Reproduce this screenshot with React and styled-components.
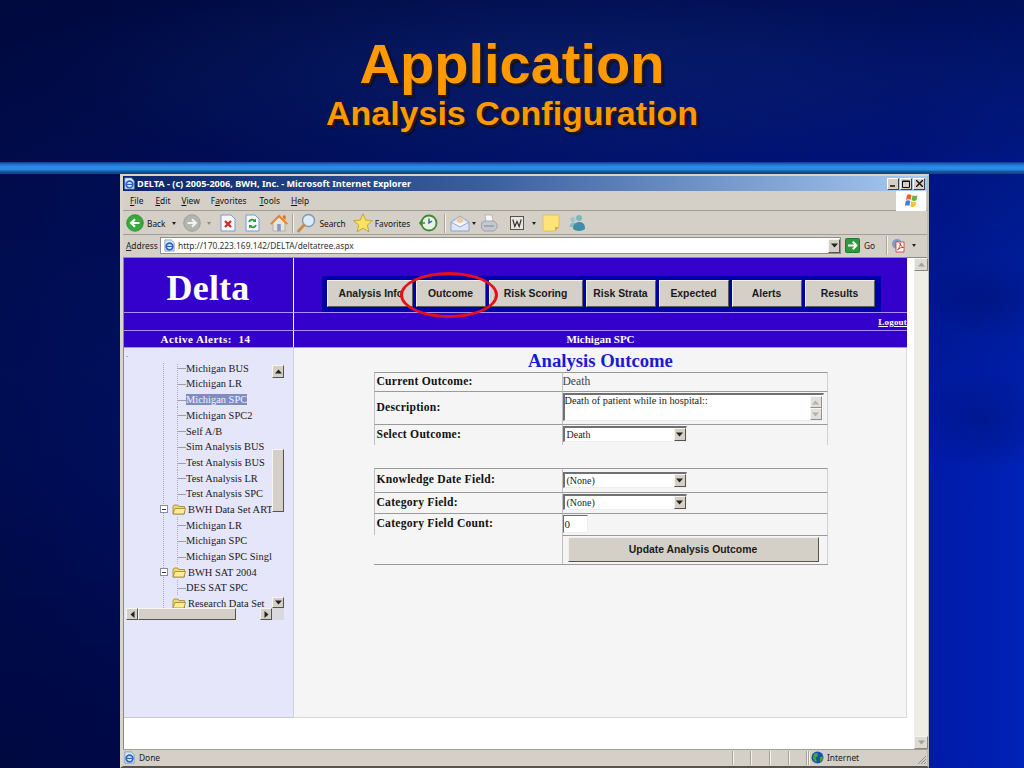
import React from "react";
import styled, { createGlobalStyle } from "styled-components";

const GlobalStyle = createGlobalStyle`
  html, body {
    margin: 0;
    padding: 0;
    overflow: hidden;
    background: #001a80;
  }
  * {
    box-sizing: border-box;
  }
`;

const uiFont = `"Noto Sans", "Liberation Sans", sans-serif`;
const pageFont = `"Liberation Serif", serif`;
const buttonFont = `"Liberation Sans", sans-serif`;

const Slide = styled.div`
  width: 1024px;
  height: 768px;
  overflow: hidden;
  display: flex;
  flex-direction: column;
  background:
    radial-gradient(ellipse 70px 40px at 985px 300px, rgba(0, 10, 90, 0.3), rgba(0, 10, 90, 0) 100%),
    radial-gradient(ellipse 70px 50px at 985px 420px, rgba(0, 10, 90, 0.3), rgba(0, 10, 90, 0) 100%),
    radial-gradient(ellipse 500px 110px at 560px 70px, rgba(30, 70, 150, 0.25), rgba(30, 70, 150, 0) 100%),
    linear-gradient(180deg, rgba(0, 8, 50, 0.68) 0%, rgba(0, 8, 50, 0.32) 24%, rgba(0, 8, 50, 0) 62%),
    linear-gradient(180deg, rgba(0, 0, 30, 0) 45%, rgba(0, 0, 30, 0.42) 100%) 0 0 / 130px 100% no-repeat,
    linear-gradient(90deg, #000e58 0%, #000f62 12%, #0018a4 88%, #0022b6 100%);
`;

const Heading = styled.header`
  height: 162px;
  padding-top: 33px;
  text-align: center;
  font-family: "Liberation Sans", sans-serif;
  font-weight: 700;
  color: #ff9900;
  text-shadow: 2px 2px 0 #2a1800, 3px 3px 2px rgba(0, 0, 0, 0.5);
`;

const MainTitle = styled.h1`
  margin: 0;
  font-size: 56px;
  line-height: 62px;
  font-weight: 700;
`;

const SubTitle = styled.h2`
  margin: 0;
  font-size: 34px;
  line-height: 36px;
  font-weight: 700;
`;

const Rule = styled.div`
  height: 12px;
  flex: none;
  background: linear-gradient(180deg, #0a3a8c 0%, #1c6cc8 18%, #2c8ce8 40%, #2a88e0 62%, #14559f 80%, #0d3f88 100%);
`;

const Win = styled.div`
  margin: 0 0 0 120px;
  width: 809px;
  height: 594px;
  flex: none;
  display: flex;
  flex-direction: column;
  background: #d4d0c8;
  border: 2px solid #d8d5cd;
  border-left-width: 3px;
  border-right-color: #bcb9b0;
  border-bottom-color: #55534e;
`;

const TitleBar = styled.div`
  height: 15px;
  flex: none;
  display: flex;
  align-items: center;
  padding: 0 2px 0 0;
  background: linear-gradient(90deg, #0a246a 0%, #3a5f9e 45%, #a6caf0 100%);
  color: #fff;
  font: 700 9.15px ${uiFont};
`;

const TitleText = styled.span`
  margin-left: 1px;
  flex: 1;
  white-space: nowrap;
`;

const WinButton = styled.button`
  width: 12px;
  height: 12px;
  margin-left: 1px;
  padding: 0;
  display: flex;
  align-items: center;
  justify-content: center;
  background: #d4d0c8;
  border: 1px solid;
  border-color: #fff #404040 #404040 #fff;
`;

const MenuRow = styled.div`
  height: 20px;
  flex: none;
  display: flex;
  align-items: center;
  border-bottom: 1px solid #a09e97;
  font: 400 8.4px ${uiFont};
  color: #111;
`;

const MenuItem = styled.span`
  margin-left: ${(p) => p.$ml}px;
  white-space: nowrap;
  u {
    text-underline-offset: 1px;
  }
`;

const FlagBox = styled.div`
  width: 30px;
  height: 20px;
  margin-left: auto;
  margin-right: 1px;
  display: flex;
  align-items: center;
  justify-content: center;
  background: #fff;
`;

const ToolRow = styled.div`
  height: 24px;
  flex: none;
  display: flex;
  align-items: center;
  padding-top: 1px;
  border-bottom: 1px solid #a09e97;
  font: 400 8.3px ${uiFont};
  color: #111;
`;

const Tool = styled.div`
  margin-left: ${(p) => p.$ml || 0}px;
  display: flex;
  align-items: center;
  flex: none;
  white-space: nowrap;
`;

const Sep = styled.div`
  width: 1px;
  height: 19px;
  flex: none;
  margin-left: ${(p) => p.$ml || 0}px;
  background: #a8a59d;
  box-shadow: 1px 0 0 #f4f2ec;
`;

const Caret = styled.span`
  width: 0;
  height: 0;
  flex: none;
  margin-left: ${(p) => p.$ml || 0}px;
  border-left: 2.5px solid transparent;
  border-right: 2.5px solid transparent;
  border-top: 3px solid ${(p) => p.$color || "#222"};
`;

const AddressRow = styled.div`
  height: 23px;
  flex: none;
  display: flex;
  align-items: center;
  padding-bottom: 1px;
  border-bottom: 1px solid #8c8a84;
  font: 400 8.4px ${uiFont};
  color: #222;
`;

const AddressLabel = styled.span`
  margin-left: 3px;
  width: 34px;
`;

const AddressBox = styled.div`
  width: 681px;
  height: 17px;
  display: flex;
  align-items: center;
  padding-left: 2px;
  background: #fff;
  border: 1px solid #8f8d86;
  font-size: 8.4px;
  color: #333;
`;

const UrlText = styled.span`
  margin-left: 2px;
  flex: 1;
`;

const ArrowButton = styled.span`
  width: ${(p) => p.$w || 12}px;
  height: ${(p) => p.$h || 13}px;
  flex: none;
  display: flex;
  align-items: center;
  justify-content: center;
  background: #d4d0c8;
  border: 1px solid;
  border-color: #f6f5f1 #55534e #55534e #f6f5f1;
  opacity: ${(p) => (p.$faint ? 0.65 : 1)};
`;

const Viewport = styled.div`
  flex: 1;
  min-height: 0;
  display: flex;
  background: #fff;
  border-left: 1px solid #8c8a84;
`;

const PageArea = styled.div`
  width: 790px;
  flex: none;
  padding-right: 7px;
`;

const Frame = styled.div`
  height: 460px;
  display: grid;
  grid-template-columns: 170px 1fr;
  grid-template-rows: 55px 18px 17px 1fr;
  background: #3300cc;
  color: #fff;
  font-family: ${pageFont};
`;

const Cell = styled.div`
  display: flex;
  align-items: center;
  justify-content: ${(p) => p.$justify || "center"};
  padding-right: ${(p) => p.$nudge || 0}px;
  border-bottom: 1px solid #a68fff;
  border-right: ${(p) => (p.$side ? "1px solid #fff" : "0")};
  font-size: 11px;
  font-weight: 700;
  letter-spacing: ${(p) => p.$track || 0}px;
  position: relative;
`;

const Brand = styled.div`
  font-size: 36px;
  font-weight: 700;
  letter-spacing: 0.2px;
  margin-top: 5px;
  margin-right: 1px;
`;

const NavStrip = styled.nav`
  margin-left: 28px;
  margin-right: auto;
  margin-top: 17px;
  height: 36px;
  display: flex;
  align-items: center;
  gap: 3px;
  padding: 0 6px 0 4.5px;
  background: #0000a8;
`;

const NavButton = styled.button`
  width: ${(p) => p.$w || 70}px;
  height: 27px;
  padding: 0 0 0 ${(p) => p.$pad || 0}px;
  overflow: hidden;
  white-space: nowrap;
  text-align: ${(p) => (p.$pad ? "left" : "center")};
  background: #d4d0c8;
  border: 1px solid;
  border-color: #f2f0eb #5c5a56 #5c5a56 #f2f0eb;
  font: 700 10.4px ${buttonFont};
  color: #1a1a1a;
`;

const Ring = styled.div`
  position: absolute;
  left: 106px;
  top: 14px;
  width: 98px;
  height: 46px;
  border: 3.5px solid #e60f1e;
  border-radius: 50%;
`;

const LogoutLink = styled.a`
  margin-left: auto;
  font-size: 9px;
  color: #fff;
  text-decoration: underline;
  letter-spacing: 0.2px;
`;

const SidePane = styled.aside`
  background: #e6e6fa;
  border-right: 1px solid #d0cfd8;
  border-bottom: 1px solid #c8c8d0;
  padding: 2px 0 0 2px;
  color: #111;
`;

const Speck = styled.div`
  height: 13px;
  font: 400 9px/9px ${pageFont};
  color: #555;
`;

const TreeWrap = styled.div`
  width: 158px;
  display: grid;
  grid-template-columns: 146px 12px;
  grid-template-rows: 245px 12px;
`;

const TreeList = styled.div`
  overflow: hidden;
  background: repeating-linear-gradient(180deg, #a8a8c0 0 1px, transparent 1px 2px) 37px 0 / 1px 100% no-repeat;
`;

const TreeRows = styled.div`
  margin-top: -2.6px;
`;

const TreeRow = styled.div`
  height: 15.7px;
  display: flex;
  align-items: center;
  white-space: nowrap;
  font: 400 10.4px ${pageFont};
  color: #1a1a1a;
`;

const LeafStem = styled.span`
  width: 60px;
  height: 15.7px;
  flex: none;
  background:
    repeating-linear-gradient(180deg, #a8a8c0 0 1px, transparent 1px 2px) 51px 0 / 1px 100% no-repeat,
    linear-gradient(#9c9cb0, #9c9cb0) 51px 8px / 9px 1px no-repeat;
`;

const Expander = styled.span`
  width: 8px;
  height: 8px;
  flex: none;
  margin-left: 34px;
  background:
    linear-gradient(#333, #333) 1px 2.5px / 4px 1px no-repeat,
    #fff;
  border: 1px solid #8c8c9c;
`;

const FolderSlot = styled.span`
  margin: 0 2px 0 ${(p) => p.$ml || 4}px;
  display: flex;
  flex: none;
`;

const RowLabel = styled.span`
  letter-spacing: 0.02px;
  background: ${(p) => (p.$selected ? "#7f8cc0" : "transparent")};
  color: ${(p) => (p.$selected ? "#f2f2ff" : "inherit")};
`;

const ScrollV = styled.div`
  display: flex;
  flex-direction: column;
  background: #e6e6fa;
`;

const ScrollGap = styled.div`
  height: ${(p) => p.$h}px;
  flex: ${(p) => (p.$grow ? 1 : "none")};
`;

const ScrollThumb = styled.div`
  height: ${(p) => p.$h}px;
  width: ${(p) => p.$w || "100%"};
  flex: none;
  background: #d4d0c8;
  border: 1px solid;
  border-color: #f6f5f1 #55534e #55534e #f6f5f1;
`;

const ScrollH = styled.div`
  display: flex;
  align-items: center;
  background: #e6e6fa;
`;

const Corner = styled.div`
  background: #d8d8de;
`;

const MainPane = styled.main`
  background: #f5f5f5;
  border-bottom: 1px solid #d8d8d8;
  border-right: 1px solid #dcdcdc;
  color: #1a1a1a;
  display: flex;
  flex-direction: column;
  align-items: center;
`;

const PaneTitle = styled.div`
  margin: 2px 0 0 1px;
  height: 22px;
  font-size: 18.7px;
  line-height: 22px;
  font-weight: 700;
  color: #1a1ad2;
`;

const FormTable = styled.div`
  width: 454px;
  border-bottom: 1px solid #9a9a9a;
  margin-left: 1px;
`;

const FormRow = styled.div`
  height: ${(p) => p.$h}px;
  display: grid;
  grid-template-columns: 188px 1fr;
`;

const LabelCell = styled.div`
  display: flex;
  align-items: center;
  padding: 0 0 2px 2px;
  border-left: ${(p) => (p.$plain ? "0" : "1px solid #c0c0c0")};
  border-top: ${(p) => (p.$plain ? "0" : "1px solid #9a9a9a")};
  font-size: 11.6px;
  font-weight: 700;
  letter-spacing: 0.25px;
  color: #111;
  white-space: nowrap;
`;

const ValueCell = styled.div`
  display: flex;
  align-items: center;
  padding: 0 0 2px 0;
  border-left: ${(p) => (p.$blank ? "0" : "1px solid #c0c0c0")};
  border-top: ${(p) => (p.$blank ? "0" : "1px solid #9a9a9a")};
  border-right: ${(p) => (p.$blank ? "0" : "1px solid #cfcfcf")};
  font-size: 11.6px;
  color: #444;
`;

const TextArea = styled.div`
  width: 261px;
  height: 28px;
  display: flex;
  justify-content: space-between;
  padding: 0 1px 0 0;
  background: #fff;
  border: 2px solid;
  border-color: #707070 #eee #eee #707070;
  border-width: 2px 1px 1px 2px;
  font-size: 10.3px;
  color: #222;
`;

const AreaScroll = styled.div`
  width: 12px;
  display: flex;
  flex-direction: column;
  justify-content: space-between;
  padding: 1px 0;
  flex: none;
`;

const Dropdown = styled.div`
  width: 124px;
  height: 16px;
  display: flex;
  align-items: center;
  justify-content: space-between;
  padding-left: 2px;
  background: #fff;
  border: 2px solid;
  border-color: #707070 #eee #eee #707070;
  border-width: 2px 1px 1px 2px;
  font-size: 10px;
  color: #222;
`;

const CountInput = styled.div`
  width: 25px;
  height: 18px;
  display: flex;
  align-items: center;
  padding-left: 1px;
  background: #fff;
  border: 1px solid;
  border-color: #6a6a6a #eee #eee #6a6a6a;
  font-size: 11px;
  color: #222;
`;

const UpdateButton = styled.button`
  width: 251px;
  height: 25px;
  margin-left: 5px;
  background: #d4d0c8;
  border: 1px solid;
  border-color: #f2f0eb #55534e #55534e #f2f0eb;
  font: 700 10.4px ${buttonFont};
  color: #1a1a1a;
`;

const PageScroll = styled.div`
  width: 14px;
  flex: none;
  display: flex;
  flex-direction: column;
  justify-content: space-between;
  background: #eeede6;
`;

const StatusBar = styled.footer`
  height: 17px;
  flex: none;
  display: flex;
  align-items: center;
  padding-bottom: 1px;
  border-top: 1px solid #a09e97;
  font: 400 8.4px ${uiFont};
  color: #222;
`;

const StatusText = styled.span`
  margin-left: 3px;
  width: 575px;
`;

const StatusSlot = styled.span`
  width: ${(p) => p.$w}px;
  height: 14px;
  flex: none;
  border-right: 1px solid #a5a39c;
  box-shadow: 1px 0 0 #f4f2ec;
`;

const ZoneCell = styled.span`
  margin-left: 2px;
  display: flex;
  align-items: center;
  gap: 3px;
  flex: 1;
`;

const Grip = styled.svg`
  flex: none;
  margin-top: 4px;
`;

const Up = ({ color = "#222" }) => (
  <svg width="7" height="5" viewBox="0 0 7 5"><path d="M3.5 0.5 7 4.5H0Z" fill={color} /></svg>
);
const Down = ({ color = "#222" }) => (
  <svg width="7" height="5" viewBox="0 0 7 5"><path d="M3.5 4.5 7 0.5H0Z" fill={color} /></svg>
);
const Left = () => (
  <svg width="5" height="7" viewBox="0 0 5 7"><path d="M0.5 3.5 4.5 0V7Z" fill="#222" /></svg>
);
const Right = () => (
  <svg width="5" height="7" viewBox="0 0 5 7"><path d="M4.5 3.5 0.5 0V7Z" fill="#222" /></svg>
);

const IeDoc = ({ size = 13 }) => (
  <svg width={size} height={size} viewBox="0 0 14 14">
    <path d="M2 1h7l3 3v9H2z" fill="#dce8f6" stroke="#6c8fc0" strokeWidth="0.8" />
    <circle cx="7" cy="8" r="3.6" fill="none" stroke="#2a62c8" strokeWidth="1.8" />
    <path d="M3.5 8h7" stroke="#2a62c8" strokeWidth="1.2" />
  </svg>
);

const WinFlag = () => (
  <svg width="19" height="15" viewBox="0 0 19 15">
    <path d="M5 2c2-1 3-1 4.500 0l-1 5c-1.500-1-3-1-4.500 0z" fill="#e8622a" />
    <path d="M10.500 2.300c2 1 3 1 5 0l-1 5c-2 1-3 1-5 0z" fill="#6cb33e" />
    <path d="M3.800 8c1.500-1 3-1 4.500 0l-1 5c-1.500-1-3-1-4.500 0z" fill="#3f7fd6" />
    <path d="M9.300 8.300c2 1 3 1 5 0l-1 5c-2 1-3 1-5 0z" fill="#f2c230" />
  </svg>
);

const RoundArrow = ({ fill, ring }) => (
  <svg width="18" height="18" viewBox="0 0 18 18">
    <circle cx="9" cy="9" r="8.300" fill={fill} stroke={ring} strokeWidth="0.8" />
    <path d="M13.500 9H6M9 5.200 5.200 9 9 12.800" fill="none" stroke="#fff" strokeWidth="2.200" />
  </svg>
);

const ForwardArrow = () => (
  <svg width="18" height="18" viewBox="0 0 18 18">
    <circle cx="9" cy="9" r="8.300" fill="#b4b4ae" stroke="#94948e" strokeWidth="0.8" />
    <path d="M4.500 9H12M9 5.200 12.800 9 9 12.800" fill="none" stroke="#f2f2ee" strokeWidth="2.200" />
  </svg>
);

const StopIcon = () => (
  <svg width="16" height="18" viewBox="0 0 16 18">
    <path d="M1 1h10l4 4v12H1z" fill="#f4f7fd" stroke="#7d9ad0" />
    <path d="M5 7l6 6M11 7l-6 6" stroke="#d8261c" strokeWidth="2.200" />
  </svg>
);

const RefreshIcon = () => (
  <svg width="15" height="18" viewBox="0 0 15 18">
    <path d="M1 1h9l4 4v12H1z" fill="#f4f7fd" stroke="#7d9ad0" />
    <path d="M4 8a3.500 3.500 0 0 1 6-1M11 11a3.500 3.500 0 0 1-6 1" fill="none" stroke="#2f9a35" strokeWidth="1.800" />
    <path d="M11 4.500v3.500H7.700zM4 14.500V11h3.300z" fill="#2f9a35" />
  </svg>
);

const HomeIcon = () => (
  <svg width="20" height="20" viewBox="0 0 20 20">
    <path d="M4 9v9h12V9L10 4z" fill="#e9e4da" stroke="#a8a090" strokeWidth="0.7" />
    <path d="M1 10.500 10 1.500l9 9-1.500 1.200L10 4.500 2.500 11.700z" fill="#e8852a" />
    <path d="M14 2.500h2.500V7L14 5z" fill="#c9702a" />
    <rect x="8.200" y="11" width="3.600" height="7" fill="#7f9cc8" />
  </svg>
);

const SearchIcon = () => (
  <svg width="19" height="20" viewBox="0 0 19 20">
    <circle cx="11.500" cy="7.500" r="6" fill="#dcebf8" stroke="#7d98b8" strokeWidth="1.400" />
    <path d="M7 12 1.500 18" stroke="#c88a48" strokeWidth="2.800" strokeLinecap="round" />
  </svg>
);

const StarIcon = () => (
  <svg width="20" height="20" viewBox="0 0 20 20">
    <path d="M10 .8l2.700 6.300 6.700.6-5.100 4.400 1.600 6.600L10 15.200l-5.900 3.500 1.600-6.600L.6 7.700l6.700-.6z" fill="#fbe25c" stroke="#b89a20" strokeWidth="0.8" />
  </svg>
);

const HistoryIcon = () => (
  <svg width="19" height="18" viewBox="0 0 19 18">
    <circle cx="10" cy="9" r="7.500" fill="#e8f3e4" stroke="#3c8a3a" strokeWidth="1.800" />
    <path d="M10 4.500V9l3-2" fill="none" stroke="#2c5a9a" strokeWidth="1.400" />
    <path d="M1 9h5M3 6.500 .8 9 3 11.500" fill="none" stroke="#3c8a3a" strokeWidth="1.600" />
  </svg>
);

const MailIcon = () => (
  <svg width="20" height="18" viewBox="0 0 20 18">
    <path d="M1 8 10 2l9 6v9H1z" fill="#dde6f4" stroke="#7f96c2" strokeWidth="0.8" />
    <path d="M1 8l9 5 9-5" fill="#f4f7fc" stroke="#7f96c2" strokeWidth="0.8" />
    <circle cx="10" cy="6" r="3" fill="#f0c8a0" />
  </svg>
);

const PrintIcon = () => (
  <svg width="18" height="18" viewBox="0 0 18 18">
    <path d="M5 1h7l1 7H6z" fill="#f6f6f4" stroke="#a8a8a4" strokeWidth="0.7" />
    <path d="M1.500 9 5 7h9l3 3v4l-3 3H4l-2.500-3z" fill="#c4c8d0" stroke="#8c8f96" strokeWidth="0.7" />
    <path d="M4 12h10" stroke="#80848c" />
  </svg>
);

const WordIcon = () => (
  <svg width="14" height="14" viewBox="0 0 14 14">
    <rect x="0.500" y="0.500" width="13" height="13" fill="#e8e6e0" stroke="#55534e" />
    <path d="M2.800 3.500 4.800 10.500 7 5.500 9.200 10.500 11.200 3.500" fill="none" stroke="#333" strokeWidth="1.200" />
  </svg>
);

const NoteIcon = () => (
  <svg width="18" height="18" viewBox="0 0 18 18">
    <path d="M1 2.500Q1 1 2.500 1h13Q17 1 17 2.500V13l-4 4H2.500Q1 17 1 15.500z" fill="#ffe27a" stroke="#e8b84a" strokeWidth="0.8" />
    <path d="M17 13h-4v4z" fill="#e0a83a" />
  </svg>
);

const PeopleIcon = () => (
  <svg width="18" height="18" viewBox="0 0 18 18">
    <circle cx="5" cy="5.500" r="2.500" fill="#9cc4cc" />
    <circle cx="11" cy="4" r="3" fill="#80b4c0" />
    <path d="M1.500 13c0-3 2-4.500 4-4.500S9 10 9 13z" fill="#8cb8c0" />
    <path d="M5 15c0-5 3-7 6.500-7s5.500 2 5.500 7c-3 2.500-9 2.500-12 0z" fill="#3f8fa8" />
  </svg>
);

const GoIcon = () => (
  <svg width="15" height="15" viewBox="0 0 15 15">
    <rect x="0.500" y="0.500" width="14" height="14" rx="1" fill="#2f9a3c" stroke="#1f7a2c" />
    <path d="M3 7.500h8M7.800 3.800l3.700 3.700-3.700 3.700" fill="none" stroke="#fff" strokeWidth="2" />
  </svg>
);

const PdfIcon = () => (
  <svg width="15" height="15" viewBox="0 0 15 15">
    <circle cx="6" cy="6" r="5" fill="#7f9cc8" />
    <path d="M5 4h8v10H5z" fill="#fff" stroke="#c83028" strokeWidth="0.8" />
    <path d="M6.500 12c2-2 3-5 2.500-7 1 3 2 4 3.500 4.500-2-.2-4 .5-6 2.500z" fill="none" stroke="#d02820" strokeWidth="0.9" />
  </svg>
);

const Globe = () => (
  <svg width="13" height="13" viewBox="0 0 13 13">
    <circle cx="6.500" cy="6.500" r="6" fill="#1a4fa8" />
    <path d="M3 2.500 6.500 2 7 5 4.500 7 6 10.500 4 11 2 7zM9 6l3-.5-.5 3.500L9 11z" fill="#3fa83a" />
  </svg>
);

const Folder = () => (
  <svg width="14" height="11" viewBox="0 0 14 11">
    <path d="M1 2.500 2 1h4l1 1.500h5.500V10H1z" fill="#f2d860" stroke="#8a7a30" strokeWidth="0.7" />
    <path d="M1 10 3 4.500h10.500L12 10z" fill="#ffeb94" stroke="#8a7a30" strokeWidth="0.7" />
  </svg>
);

const menuItems = [
  { ml: 7, label: <><u>F</u>ile</> },
  { ml: 12, label: <><u>E</u>dit</> },
  { ml: 11, label: <><u>V</u>iew</> },
  { ml: 11, label: <>F<u>a</u>vorites</> },
  { ml: 13, label: <><u>T</u>ools</> },
  { ml: 11, label: <><u>H</u>elp</> },
];

const navItems = [
  { label: "Analysis Info", w: 86, pad: 11 },
  { label: "Outcome", w: 70 },
  { label: "Risk Scoring", w: 94 },
  { label: "Risk Strata", w: 70 },
  { label: "Expected", w: 70 },
  { label: "Alerts", w: 70 },
  { label: "Results", w: 70 },
];

const treeItems = [
  { label: "Michigan BUS" },
  { label: "Michigan LR" },
  { label: "Michigan SPC", selected: true },
  { label: "Michigan SPC2" },
  { label: "Self A/B" },
  { label: "Sim Analysis BUS" },
  { label: "Test Analysis BUS" },
  { label: "Test Analysis LR" },
  { label: "Test Analysis SPC" },
  { label: "BWH Data Set ART", folder: true },
  { label: "Michigan LR" },
  { label: "Michigan SPC" },
  { label: "Michigan SPC Single" },
  { label: "BWH SAT 2004", folder: true },
  { label: "DES SAT SPC" },
  { label: "Research Data Set", folder: true, closed: true },
];

const formRows = [
  { h: 19, label: "Current Outcome:", value: "Death" },
  { h: 33, label: "Description:", area: "Death of patient while in hospital::" },
  { h: 21, label: "Select Outcome:", select: "Death" },
  { h: 23, blank: true },
  { h: 24, label: "Knowledge Date Field:", select: "(None)" },
  { h: 21, label: "Category Field:", select: "(None)" },
  { h: 22, label: "Category Field Count:", count: "0" },
  { h: 29, update: true },
];

export default function App() {
  return (
    <Slide>
      <GlobalStyle />
      <Heading>
        <MainTitle>Application</MainTitle>
        <SubTitle>Analysis Configuration</SubTitle>
      </Heading>
      <Rule />
      <Win>
        <TitleBar>
          <IeDoc size={13} />
          <TitleText>DELTA - (c) 2005-2006, BWH, Inc. - Microsoft Internet Explorer</TitleText>
          <WinButton>
            <svg width="7" height="7" viewBox="0 0 7 7"><path d="M0 6h5" stroke="#111" strokeWidth="1.500" /></svg>
          </WinButton>
          <WinButton>
            <svg width="8" height="8" viewBox="0 0 8 8"><path d="M.5 1h7v6.500h-7zM.5 1.500h7" fill="none" stroke="#111" /></svg>
          </WinButton>
          <WinButton>
            <svg width="7" height="7" viewBox="0 0 7 7"><path d="M0 0l7 7M7 0 0 7" stroke="#111" strokeWidth="1.400" /></svg>
          </WinButton>
        </TitleBar>
        <MenuRow>
          {menuItems.map((item, index) => (
            <MenuItem key={index} $ml={item.ml}>{item.label}</MenuItem>
          ))}
          <FlagBox><WinFlag /></FlagBox>
        </MenuRow>
        <ToolRow>
          <Tool $ml={3}><RoundArrow fill="#3aa83c" ring="#2a8a30" /></Tool>
          <Tool $ml={3}>Back</Tool>
          <Caret $ml={7} />
          <Tool $ml={7}><ForwardArrow /></Tool>
          <Caret $ml={6} $color="#8c8c86" />
          <Tool $ml={9}><StopIcon /></Tool>
          <Tool $ml={9}><RefreshIcon /></Tool>
          <Tool $ml={9}><HomeIcon /></Tool>
          <Sep $ml={3} />
          <Tool $ml={4}><SearchIcon /></Tool>
          <Tool $ml={3}>Search</Tool>
          <Tool $ml={7}><StarIcon /></Tool>
          <Tool $ml={2}>Favorites</Tool>
          <Tool $ml={9}><HistoryIcon /></Tool>
          <Sep $ml={6} />
          <Tool $ml={5}><MailIcon /></Tool>
          <Caret $ml={2} />
          <Tool $ml={4}><PrintIcon /></Tool>
          <Tool $ml={12}><WordIcon /></Tool>
          <Caret $ml={8} />
          <Tool $ml={6}><NoteIcon /></Tool>
          <Tool $ml={8}><PeopleIcon /></Tool>
        </ToolRow>
        <AddressRow>
          <AddressLabel><u>A</u>ddress</AddressLabel>
          <AddressBox>
            <IeDoc size={13} />
            <UrlText>http://170.223.169.142/DELTA/deltatree.aspx</UrlText>
            <ArrowButton $w={12} $h={14}><Down /></ArrowButton>
          </AddressBox>
          <Tool $ml={4}><GoIcon /></Tool>
          <Tool $ml={4}>Go</Tool>
          <Sep $ml={11} />
          <Tool $ml={4}><PdfIcon /></Tool>
          <Caret $ml={6} />
        </AddressRow>
        <Viewport>
          <PageArea>
            <Frame>
              <Cell $side><Brand>Delta</Brand></Cell>
              <Cell>
                <NavStrip>
                  {navItems.map((item) => (
                    <NavButton key={item.label} $w={item.w} $pad={item.pad}>{item.label}</NavButton>
                  ))}
                </NavStrip>
                <Ring />
              </Cell>
              <Cell $side />
              <Cell $justify="flex-end"><LogoutLink>Logout</LogoutLink></Cell>
              <Cell $side $track={0.5} $nudge={6}>Active Alerts:&nbsp; 14</Cell>
              <Cell>Michigan SPC</Cell>
              <SidePane>
                <Speck>.</Speck>
                <TreeWrap>
                  <TreeList>
                    <TreeRows>
                      {treeItems.map((item, index) => (
                        <TreeRow key={index}>
                          {item.folder ? (
                            <>
                              {item.closed ? <FolderSlot $ml={46}><Folder /></FolderSlot> : <Expander />}
                              {!item.closed && <FolderSlot><Folder /></FolderSlot>}
                            </>
                          ) : (
                            <LeafStem />
                          )}
                          <RowLabel $selected={item.selected}>{item.label}</RowLabel>
                        </TreeRow>
                      ))}
                    </TreeRows>
                  </TreeList>
                  <ScrollV>
                    <ScrollGap $h={2} />
                    <ArrowButton $h={13}><Up /></ArrowButton>
                    <ScrollGap $h={71} />
                    <ScrollThumb $h={63} />
                    <ScrollGap $h={85} />
                    <ArrowButton $h={11}><Down /></ArrowButton>
                  </ScrollV>
                  <ScrollH>
                    <ArrowButton $h={12}><Left /></ArrowButton>
                    <ScrollThumb $h={12} $w="98px" />
                    <ScrollGap $h={12} $grow />
                    <ArrowButton $h={12}><Right /></ArrowButton>
                  </ScrollH>
                  <Corner />
                </TreeWrap>
              </SidePane>
              <MainPane>
                <PaneTitle>Analysis Outcome</PaneTitle>
                <FormTable>
                  {formRows.map((row, index) => (
                    <FormRow key={index} $h={row.h}>
                      <LabelCell $plain={row.blank || row.update}>{row.label}</LabelCell>
                      <ValueCell $blank={row.blank}>
                        {row.value}
                        {row.area && (
                          <TextArea>
                            <span>{row.area}</span>
                            <AreaScroll>
                              <ArrowButton $h={12} $faint><Up color="#888" /></ArrowButton>
                              <ArrowButton $h={12} $faint><Down color="#888" /></ArrowButton>
                            </AreaScroll>
                          </TextArea>
                        )}
                        {row.select && (
                          <Dropdown>
                            {row.select}
                            <ArrowButton $h={13}><Down /></ArrowButton>
                          </Dropdown>
                        )}
                        {row.count && <CountInput>{row.count}</CountInput>}
                        {row.update && <UpdateButton>Update Analysis Outcome</UpdateButton>}
                      </ValueCell>
                    </FormRow>
                  ))}
                </FormTable>
              </MainPane>
            </Frame>
          </PageArea>
          <PageScroll>
            <ArrowButton $w={14} $h={13} $faint><Up color="#777" /></ArrowButton>
            <ArrowButton $w={14} $h={13} $faint><Down color="#777" /></ArrowButton>
          </PageScroll>
        </Viewport>
        <StatusBar>
          <IeDoc size={13} />
          <StatusText>Done</StatusText>
          <StatusSlot $w={19} />
          <StatusSlot $w={18} />
          <StatusSlot $w={19} />
          <StatusSlot $w={19} />
          <StatusSlot $w={18} />
          <StatusSlot $w={2} />
          <ZoneCell><Globe /> Internet</ZoneCell>
          <Grip width="10" height="10" viewBox="0 0 10 10">
            <path d="M9 1 1 9M9 4 4 9M9 7 7 9" stroke="#8c8a84" />
          </Grip>
        </StatusBar>
      </Win>
    </Slide>
  );
}
